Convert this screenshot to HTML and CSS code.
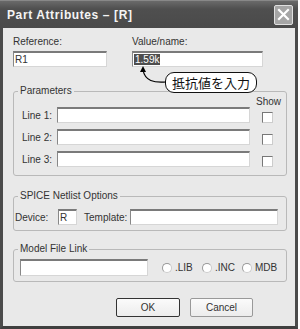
FILE: index.html
```html
<!DOCTYPE html>
<html>
<head>
<meta name="viewport" content="width=device-width, initial-scale=1.0">
  <title>Part Attributes</title>
  <link rel="stylesheet" href="styles.css">
</head>
<body>
  <div class="window">
    <div class="titlebar">
      <span class="title">Part Attributes – [R]</span>
      <span class="close-btn">
        <svg width="13" height="13" viewBox="0 0 13 13">
          <path d="M2 2 L11 11 M11 2 L2 11" stroke="#fff" stroke-width="2.2" stroke-linecap="square"/>
        </svg>
      </span>
    </div>

    <div class="client">
      <div class="top-row">
        <div class="field ref-field">
          <div class="label">Reference:</div>
          <div class="textbox">R1</div>
        </div>
        <div class="field value-field">
          <div class="label">Value/name:</div>
          <div class="textbox"><span class="selected">1.59k</span></div>
          <!-- note bubble pointing at the value box -->
          <svg class="callout-arrow" width="36" height="22" viewBox="0 0 36 22">
            <path d="M34 16 C 22 17, 13 15, 11 4" fill="none" stroke="#000" stroke-width="1.2"/>
            <path d="M11 0 L8 6 L14 6 Z" fill="#000"/>
          </svg>
          <div class="callout">抵抗値を入力</div>
        </div>
      </div>

      <div class="group params">
        <span class="legend">Parameters</span>
        <div class="show-head">Show</div>
        <div class="line-row">
          <span class="line-label">Line 1:</span>
          <div class="textbox line-box"></div>
          <span class="checkbox"></span>
        </div>
        <div class="line-row">
          <span class="line-label">Line 2:</span>
          <div class="textbox line-box"></div>
          <span class="checkbox"></span>
        </div>
        <div class="line-row">
          <span class="line-label">Line 3:</span>
          <div class="textbox line-box"></div>
          <span class="checkbox"></span>
        </div>
      </div>

      <div class="group spice">
        <span class="legend">SPICE Netlist Options</span>
        <div class="spice-row">
          <span class="device-label">Device:</span>
          <div class="textbox device-box">R</div>
          <span class="template-label">Template:</span>
          <div class="textbox template-box"></div>
        </div>
      </div>

      <div class="group model">
        <span class="legend">Model File Link</span>
        <div class="model-row">
          <div class="textbox model-box"></div>
          <span class="radio-item"><span class="radio"></span>.LIB</span>
          <span class="radio-item"><span class="radio"></span>.INC</span>
          <span class="radio-item"><span class="radio"></span>MDB</span>
        </div>
      </div>

      <div class="buttons">
        <div class="btn btn-default">OK</div>
        <div class="btn">Cancel</div>
      </div>
    </div>
  </div>
</body>
</html>
```

FILE: styles.css
```css
body {
  margin: 0;
  font-family: "Liberation Sans", Arial, sans-serif;
  font-size: 10px;
  color: #333;
  background-color: #fff;
  overflow: hidden;
}

.window {
  box-sizing: border-box;
  width: 298px;
  height: 329px;
  background-color: #e9e9e9;
  border-left: 3px solid #4b4b4b;
  border-right: 3px solid #4b4b4b;
  border-bottom: 3px solid #3f3f3f;
}

.titlebar {
  height: 28px;
  margin: 0 -3px;
  padding: 0 4px 0 7px;
  display: flex;
  align-items: center;
  justify-content: space-between;
  background: linear-gradient(#6a6a6a, #4f4f4f 30%, #4a4a4a);
  border-top: 1px solid #888;
  box-sizing: border-box;
}

.title {
  color: #f4f4f4;
  font-weight: bold;
  font-size: 12px;
  letter-spacing: 0.6px;
}

.close-btn {
  width: 17px;
  height: 18px;
  margin-right: 1px;
  display: flex;
  align-items: center;
  justify-content: center;
  background-color: #a5a5a5;
  border: 1px solid #e0e0e0;
  border-radius: 2px;
}

.client {
  padding: 8px 8px 0 10px;
}

/* text boxes */
.textbox {
  box-sizing: border-box;
  height: 16px;
  background-color: #fff;
  border-top: 2px solid #7a7a7a;
  border-left: 1px solid #888;
  border-right: 1px solid #d6d6d6;
  border-bottom: 1px solid #d6d6d6;
  padding-left: 1px;
  line-height: 13px;
  font-size: 10px;
}

.top-row {
  display: flex;
}

.field .label {
  height: 12px;
  line-height: 12px;
  margin-bottom: 3px;
}

.ref-field {
  width: 94px;
}

.value-field {
  position: relative;
  width: 131px;
  margin-left: 25px;
}

.selected {
  background-color: #4e4e4e;
  color: #fff;
  padding: 0 1px;
}

.callout {
  position: absolute;
  left: 33px;
  top: 36px;
  z-index: 2;
  width: 92px;
  height: 21px;
  box-sizing: border-box;
  border: 1px solid #111;
  border-radius: 9px;
  background-color: #fff;
  font-family: "Noto Sans CJK JP", sans-serif;
  font-size: 13px;
  line-height: 19px;
  text-align: center;
  color: #111;
}

.callout-arrow {
  position: absolute;
  left: 0;
  top: 30px;
  z-index: 3;
}

/* group boxes */
.group {
  position: relative;
  border: 1px solid #b9b9b9;
  border-radius: 3px;
}

.legend {
  position: absolute;
  left: 4px;
  top: -7px;
  padding: 0 2px;
  line-height: 12px;
  background-color: #e9e9e9;
}

.params {
  margin-top: 24px;
  padding: 4px 0 8px 8px;
}

.show-head {
  height: 11px;
  line-height: 11px;
  padding-left: 234px;
}

.line-row {
  display: flex;
  height: 16px;
  margin-bottom: 6px;
}

.line-row:last-child {
  margin-bottom: 0;
}

.line-label {
  width: 35px;
  line-height: 17px;
}

.line-box {
  width: 193px;
}

.checkbox {
  align-self: flex-end;
  box-sizing: border-box;
  width: 11px;
  height: 11px;
  margin-left: 12px;
  background-color: #fff;
  border-top: 1px solid #777;
  border-left: 1px solid #777;
  border-right: 1px solid #ccc;
  border-bottom: 1px solid #ccc;
}

.spice {
  margin-top: 20px;
  padding: 12px 0 5px 1px;
}

.spice-row {
  display: flex;
  align-items: center;
}

.device-label {
  width: 43px;
}

.device-box {
  width: 19px;
}

.template-label {
  width: 46px;
  margin-left: 7px;
}

.template-box {
  width: 148px;
}

.model {
  margin-top: 18px;
  padding: 9px 0 5px 6px;
}

.model-row {
  display: flex;
  align-items: center;
}

.model-box {
  width: 128px;
  height: 17px;
  margin-right: 14px;
}

.radio-item {
  display: flex;
  align-items: center;
  width: 40px;
}

.radio {
  box-sizing: border-box;
  width: 10px;
  height: 10px;
  margin-right: 3px;
  border-radius: 50%;
  background-color: #fff;
  border: 1px solid #ccc;
  border-top-color: #999;
  border-left-color: #999;
}

.buttons {
  display: flex;
  gap: 10px;
  margin-top: 16px;
  padding-left: 103px;
}

.btn {
  box-sizing: border-box;
  width: 63px;
  height: 19px;
  line-height: 17px;
  text-align: center;
  background: linear-gradient(#fbfbfb, #ececec);
  border: 1px solid #999;
  border-radius: 2px;
}

.btn-default {
  width: 64px;
  border: 1px solid #333;
}
```
